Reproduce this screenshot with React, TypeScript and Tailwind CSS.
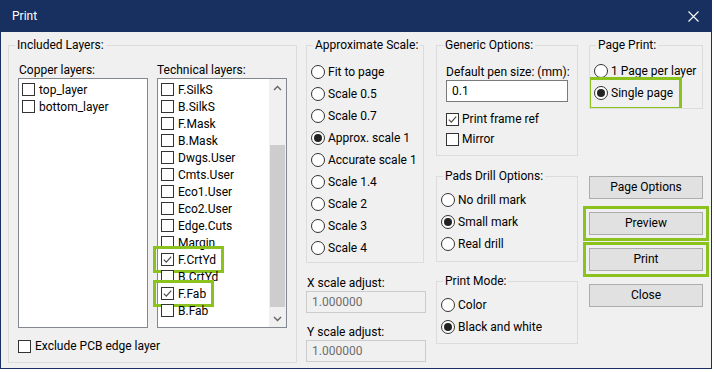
import type { ReactNode } from 'react'

const COPPER = ['top_layer', 'bottom_layer']
const TECH = [
  'F.SilkS', 'B.SilkS', 'F.Mask', 'B.Mask', 'Dwgs.User', 'Cmts.User', 'Eco1.User',
  'Eco2.User', 'Edge.Cuts', 'Margin', 'F.CrtYd', 'B.CrtYd', 'F.Fab', 'B.Fab',
]
const CHECKED = ['F.CrtYd', 'F.Fab']
const SCALES = [
  'Fit to page', 'Scale 0.5', 'Scale 0.7', 'Approx. scale 1', 'Accurate scale 1',
  'Scale 1.4', 'Scale 2', 'Scale 3', 'Scale 4',
]

function Box({ checked }: { checked?: boolean }) {
  return (
    <span className="w-[13px] h-[13px] border border-[#333333] bg-white flex items-center justify-center shrink-0">
      {checked && (
        <svg width="9" height="9" viewBox="0 0 9 9">
          <path d="M0.8 4.6 L3.3 7.1 L8.2 1.6" stroke="#4a4a4a" strokeWidth="1.2" fill="none" />
        </svg>
      )}
    </span>
  )
}

function Dot({ on }: { on?: boolean }) {
  return (
    <span className="w-[14px] h-[14px] rounded-full border border-[#333333] bg-white flex items-center justify-center shrink-0">
      {on && <span className="w-[8px] h-[8px] rounded-full bg-[#222222]" />}
    </span>
  )
}

function Radio({ label, on }: { label: string; on?: boolean }) {
  return (
    <div className="h-[22px] flex items-center gap-[3px] whitespace-nowrap">
      <Dot on={on} />
      {label}
    </div>
  )
}

function Group({ title, className = '', children }: { title: string; className?: string; children: ReactNode }) {
  return (
    <fieldset className={`border border-[#dcdcdc] min-w-0 ${className}`}>
      <legend className="ml-[6px] px-[2px] leading-[16px] whitespace-nowrap">{title}</legend>
      {children}
    </fieldset>
  )
}

function Chevron({ up }: { up?: boolean }) {
  return (
    <div className="h-[17px] flex items-center justify-center">
      <svg width="9" height="6" viewBox="0 0 9 6">
        <path d={up ? 'M1 5 L4.5 1.5 L8 5' : 'M1 1 L4.5 4.5 L8 1'} stroke="#606060" strokeWidth="1.3" fill="none" />
      </svg>
    </div>
  )
}

function Button({ label, hot }: { label: string; hot?: boolean }) {
  return (
    <button
      className={`h-[23px] w-full bg-[#e1e1e1] border border-[#adadad] text-center leading-[21px]
        ${hot ? 'outline-[3px] outline-solid outline-[#8cc21e] outline-offset-[3px]' : ''}`}
    >
      {label}
    </button>
  )
}

export default function App() {
  return (
    <div className="w-[712px] h-[369px] bg-[#f0f0f0] border-x border-b border-[#173060] flex flex-col text-[12px] text-black font-['Roboto',sans-serif] leading-[16px]">
      {/* title bar */}
      <div className="h-[32px] bg-[#173060] flex items-center justify-between text-white pl-[11px] pr-[12px] shrink-0">
        <span>Print</span>
        <svg width="11" height="11" viewBox="0 0 11 11">
          <path d="M0.5 0.5 L10.5 10.5 M10.5 0.5 L0.5 10.5" stroke="white" strokeWidth="1.1" />
        </svg>
      </div>

      <div className="flex pl-[7px] pt-[5px]">
        {/* layers */}
        <Group title="Included Layers:" className="w-[289px]">
          <div className="px-[9px] pt-[10px] pb-[8px]">
            <div className="flex gap-[9px]">
              <div className="w-[130px]">
                <div className="pl-[1px] leading-[15px]">Copper layers:</div>
                <div className="h-[250px] border border-[#828790] bg-white pt-[2px]">
                  {COPPER.map((n) => (
                    <div key={n} className="h-[17px] flex items-center gap-[4px] pl-[3px]">
                      <Box />
                      {n}
                    </div>
                  ))}
                </div>
              </div>
              <div className="w-[130px]">
                <div className="leading-[15px]">Technical layers:</div>
                <div className="h-[250px] border border-[#828790] bg-white flex">
                  <div className="flex-1 pt-[2px]">
                    {TECH.map((n) => (
                      <div key={n} className="h-[17px] flex items-center">
                        <span
                          className={`h-[17px] flex items-center gap-[4px] pl-[3px] pr-[3px]
                            ${CHECKED.includes(n) ? 'outline-[3px] outline-solid outline-[#8cc21e] outline-offset-[2px]' : ''}`}
                        >
                          <Box checked={CHECKED.includes(n)} />
                          {n}
                        </span>
                      </div>
                    ))}
                  </div>
                  <div className="w-[17px] bg-[#f0f0f0] flex flex-col">
                    <Chevron up />
                    <div className="flex-1 flex flex-col pt-[49px] pb-[3px] px-[1px]">
                      <div className="flex-1 bg-[#cdcdcd]" />
                    </div>
                    <Chevron />
                  </div>
                </div>
              </div>
            </div>
            <label className="mt-[10px] h-[16px] flex items-center gap-[4px]">
              <Box />
              Exclude PCB edge layer
            </label>
          </div>
        </Group>

        {/* scale */}
        <div className="ml-[9px] w-[120px]">
          <Group title="Approximate Scale:" className="w-[118px]">
            <div className="pt-[8px] pb-[3px] pl-[4px]">
              {SCALES.map((s) => (
                <Radio key={s} label={s} on={s === 'Approx. scale 1'} />
              ))}
            </div>
          </Group>
          <div className="mt-[12px] pl-[1px]">X scale adjust:</div>
          <div className="h-[22px] border border-[#cccccc] pl-[5px] flex items-center text-[#6d6d6d]">1.000000</div>
          <div className="mt-[11px] pl-[1px]">Y scale adjust:</div>
          <div className="h-[22px] border border-[#cccccc] pl-[5px] flex items-center text-[#6d6d6d]">1.000000</div>
        </div>

        {/* options */}
        <div className="ml-[10px] w-[142px]">
          <Group title="Generic Options:">
            <div className="px-[9px] pt-[11px] pb-[6px]">
              <div className="whitespace-nowrap">Default pen size: (mm):</div>
              <div className="h-[22px] border border-[#7a7a7a] bg-white pl-[5px] flex items-center">0.1</div>
              <div className="mt-[7px] h-[20px] flex items-center gap-[3px]">
                <Box checked />
                Print frame ref
              </div>
              <div className="h-[20px] flex items-center gap-[3px]">
                <Box />
                Mirror
              </div>
            </div>
          </Group>
          <Group title="Pads Drill Options:" className="mt-[12px]">
            <div className="pt-[5px] pb-[6px] pl-[4px]">
              <Radio label="No drill mark" />
              <Radio label="Small mark" on />
              <Radio label="Real drill" />
            </div>
          </Group>
          <Group title="Print Mode:" className="mt-[11px]">
            <div className="pt-[5px] pb-[5px] pl-[4px]">
              <Radio label="Color" />
              <Radio label="Black and white" on />
            </div>
          </Group>
        </div>

        {/* page print + buttons */}
        <div className="ml-[11px] w-[114px]">
          <Group title="Page Print:">
            <div className="pt-[7px] pb-[4px] pl-[4px] overflow-hidden">
              <Radio label="1 Page per layer" />
              <div className="h-[22px] flex items-center">
                <span className="h-[21px] flex items-center gap-[3px] pr-[3px] outline-[3px] outline-solid outline-[#8cc21e] outline-offset-[3px]">
                  <Dot on />
                  Single page
                </span>
              </div>
            </div>
          </Group>
          <div className="mt-[67px] flex flex-col gap-[13px]">
            <Button label="Page Options" />
            <Button label="Preview" hot />
            <Button label="Print" hot />
            <Button label="Close" />
          </div>
        </div>
      </div>
    </div>
  )
}
